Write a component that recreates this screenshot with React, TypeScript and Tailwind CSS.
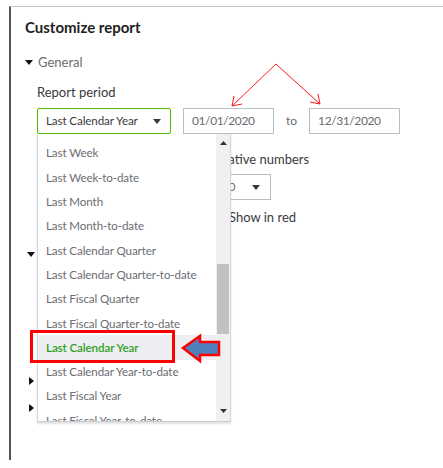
import React from 'react';

const periods = [
  'Last Week',
  'Last Week-to-date',
  'Last Month',
  'Last Month-to-date',
  'Last Calendar Quarter',
  'Last Calendar Quarter-to-date',
  'Last Fiscal Quarter',
  'Last Fiscal Quarter-to-date',
  'Last Calendar Year',
  'Last Calendar Year-to-date',
  'Last Fiscal Year',
  'Last Fiscal Year-to-date',
];

function Caret({ className = '' }: { className?: string }) {
  return (
    <svg width="8" height="5" viewBox="0 0 8 5" className={className}>
      <path d="M0 0h8L4 5z" fill="#393a3d" />
    </svg>
  );
}

function SideCaret() {
  return (
    <svg width="5" height="8" viewBox="0 0 5 8">
      <path d="M0 0v8l5-4z" fill="#111" />
    </svg>
  );
}

function PeriodDropdown() {
  return (
    <div className="absolute left-0 top-[26px] z-10 flex h-[288px] w-[194px] overflow-hidden border-x border-b border-x-[#d4d7dc] border-b-[#c9ccd1] bg-white shadow-[0_2px_2px_rgba(0,0,0,0.12)]">
      <ul className="flex-1 pt-[7px]">
        {periods.map((p) => {
          const active = p === 'Last Calendar Year';
          return (
            <li
              key={p}
              className={
                active
                  ? 'flex h-[24.3px] items-center whitespace-nowrap bg-[#eceef1] pl-[8px] text-[11.6px] font-semibold tracking-[-0.1px] text-[#2ca01c]'
                  : 'flex h-[24.3px] items-center whitespace-nowrap pl-[8px] text-[11.6px] tracking-[-0.1px] text-[#6b6c72]'
              }
            >
              {p}
            </li>
          );
        })}
      </ul>
      <div className="relative flex w-[14px] flex-col items-center bg-[#f0f0f0]">
        <svg width="7" height="4" viewBox="0 0 7 4" className="mt-[7px]">
          <path d="M0 4h7L3.5 0z" fill="#333" />
        </svg>
        <div className="mt-[119px] h-[70px] w-[12px] bg-[#c1c1c1]" />
        <svg width="7" height="4" viewBox="0 0 7 4" className="mt-auto mb-[8px]">
          <path d="M0 0h7L3.5 4z" fill="#333" />
        </svg>
      </div>
    </div>
  );
}

function Annotations() {
  return (
    <>
      <svg className="pointer-events-none absolute left-0 top-0 z-20" width="443" height="468">
        <g stroke="#ff1a1a" strokeWidth="1" fill="none">
          <path d="M276 64L232 106" />
          <path d="M232 106l2 -10M232 106l10 -2" />
          <path d="M276 64L320 104" />
          <path d="M320 104l-10 -2M320 104l-2 -10" />
        </g>
        <path
          d="M183 348L200 336V342H219V355H200V361Z"
          fill="#4f81bd"
          stroke="#ff0000"
          strokeWidth="2.5"
          strokeLinejoin="miter"
        />
      </svg>
      <div className="pointer-events-none absolute left-[30px] top-[330px] z-20 h-[33px] w-[145px] border-[3px] border-[#ff0000]" />
    </>
  );
}

export default function App() {
  return (
    <div className="relative h-[468px] w-[443px] overflow-hidden bg-white font-['Lato',sans-serif]">
      <div className="ml-[9px] mt-[6px] h-[454px] border-l-2 border-t border-l-[#555] border-t-[#c6c6c6] pl-[14px]">
        <h2 className="pt-[11px] text-[15px] font-bold leading-[18px] text-[#222]">Customize report</h2>

        <div className="mt-[18px] flex items-center gap-[5px]">
          <svg width="8" height="5" viewBox="0 0 8 5">
            <path d="M0 0h8L4 5z" fill="#111" />
          </svg>
          <span className="text-[13px] leading-[16px] text-[#6b6c72]">General</span>
        </div>

        <div className="pl-[12px]">
          <div className="mt-[14px] text-[13px] leading-[16px] text-[#393a3d]">Report period</div>

          <div className="relative mt-[8px] flex items-center">
            <div className="flex h-[26px] w-[134px] items-center justify-between rounded-[2px] border border-[#53b700] pl-[8px] pr-[9px]">
              <span className="text-[11.6px] tracking-[-0.1px] text-[#393a3d]">Last Calendar Year</span>
              <Caret />
            </div>
            <div className="ml-[12px] flex h-[26px] w-[91px] items-center border border-[#babec5] pl-[8px] text-[12px] tracking-[-0.4px] text-[#6b6c72]">
              01/01/2020
            </div>
            <span className="ml-[12px] mr-[12px] text-[12px] text-[#6b6c72]">to</span>
            <div className="flex h-[26px] w-[91px] items-center border border-[#babec5] pl-[8px] text-[12px] tracking-[-0.4px] text-[#6b6c72]">
              12/31/2020
            </div>
            <PeriodDropdown />
          </div>

          <div className="ml-[168px] mt-[17px]">
            <div className="text-[13px] leading-[16px] text-[#393a3d]">Negative numbers</div>
            <div className="mt-[7px] flex h-[26px] w-[66px] items-center justify-between border border-[#babec5] pl-[5px] pr-[10px] text-[12px] tracking-[-0.3px] text-[#6b6c72]">
              <span>-100</span>
              <Caret />
            </div>
            <div className="mt-[9px] flex items-center gap-[8px]">
              <span className="h-[16px] w-[16px] rounded-[2px] border border-[#8d9096]" />
              <span className="text-[13px] leading-[16px] text-[#393a3d]">Show in red</span>
            </div>
          </div>
        </div>

        <div className="mt-[27px] flex flex-col items-start">
          <svg width="8" height="5" viewBox="0 0 8 5" className="ml-[2px]">
            <path d="M0 0h8L4 5z" fill="#111" />
          </svg>
          <div className="ml-[4px] mt-[120px]">
            <SideCaret />
          </div>
          <div className="ml-[4px] mt-[19px]">
            <SideCaret />
          </div>
        </div>
      </div>
      <Annotations />
    </div>
  );
}
